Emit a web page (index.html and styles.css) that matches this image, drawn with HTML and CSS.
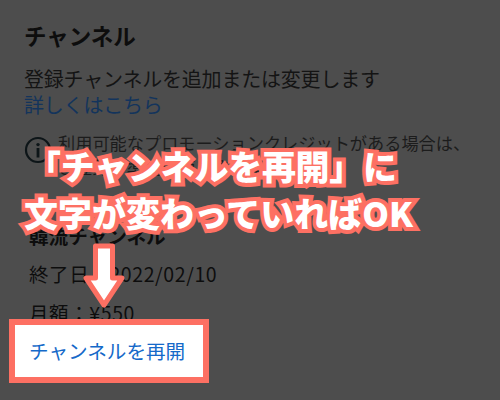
FILE: index.html
```html
<!DOCTYPE html>
<html lang="ja">
<head>
<meta charset="utf-8">
<title>チャンネル</title>
<link rel="stylesheet" href="styles.css">
</head>
<body>
<main class="panel">
  <h1 class="title">チャンネル</h1>
  <p class="desc">登録チャンネルを追加または変更します<br><a class="link">詳しくはこちら</a></p>
  <div class="notice">
    <svg class="info" viewBox="0 0 28 28" width="28" height="28"><circle cx="14" cy="14" r="12" fill="none" stroke="#0d1518" stroke-width="2.2"/><circle cx="14" cy="8.6" r="1.7" fill="#0d1518"/><rect x="12.6" y="12" width="2.8" height="9.5" fill="#0d1518"/></svg>
    <p class="notice-text">利用可能なプロモーションクレジットがある場合は、<br>ご登録の準備に適用されます</p>
  </div>
  <h2 class="name">韓流チャンネル</h2>
  <p class="row">終了日：2022/02/10</p>
  <p class="row">月額：¥550</p>
</main>
<div class="caption">
  <div class="caption-first">「チャンネルを再開」に</div>
  <div class="caption-second">文字が変わっていればOK</div>
</div>
<svg class="arrow" viewBox="0 0 42 66" width="42" height="66"><path d="M12.5 3H29.5V35H39L21 62L3 35H12.5Z" fill="#fff" stroke="#fd7063" stroke-width="5" stroke-linejoin="round"/></svg>
<div class="highlight"><a class="resume">チャンネルを再開</a></div>
</body>
</html>
```

FILE: styles.css
```css
html, body { margin: 0; padding: 0; }
body {
  width: 500px;
  height: 400px;
  overflow: hidden;
  position: relative;
  background: #4d4d4d;
  color: #0d0d0d;
  font-family: "Noto Sans CJK JP", "Noto Sans", sans-serif;
}
p, h1, h2 { margin: 0; }
.panel { padding: 20px 24px 0; }
.title { font-size: 22.5px; line-height: 30px; font-weight: 700; }
.desc { margin-top: 16px; font-size: 20px; line-height: 26px; color: #141414; letter-spacing: -0.2px; }
.link { color: #13345c; }
.notice { margin-top: 13px; display: flex; gap: 6px; }
.info { flex: none; margin-top: 5px; }
.notice-text { font-size: 17.2px; line-height: 24px; color: #1c1c1c; white-space: nowrap; }
.name { margin-top: 42px; margin-left: 5px; font-size: 19.6px; line-height: 30px; font-weight: 700; }
.name + .row { margin-top: 10px; }
.row { margin-top: 13px; margin-left: 5px; font-size: 19.5px; line-height: 26px; letter-spacing: 0.6px; }
.caption {
  position: absolute;
  left: 0;
  top: 142px;
  width: 500px;
  font-size: 34px;
  line-height: 47px;
  font-weight: 900;
  color: #fff;
  -webkit-text-stroke: 8px #fd7063;
  paint-order: stroke fill;
  white-space: nowrap;
  padding-left: 27px;
  box-sizing: border-box;
}
.caption-first { letter-spacing: -0.3px; }
.caption-second { margin-left: -3px; }
.arrow { position: absolute; left: 83px; top: 243px; }
.highlight {
  position: absolute;
  left: 9px;
  top: 319px;
  width: 174px;
  height: 52px;
  border: 6px solid #fd7063;
  background: #fff;
  display: flex;
  align-items: center;
  padding-left: 14px;
}
.resume { color: #1569c9; font-size: 19.6px; line-height: 26px; }
```
